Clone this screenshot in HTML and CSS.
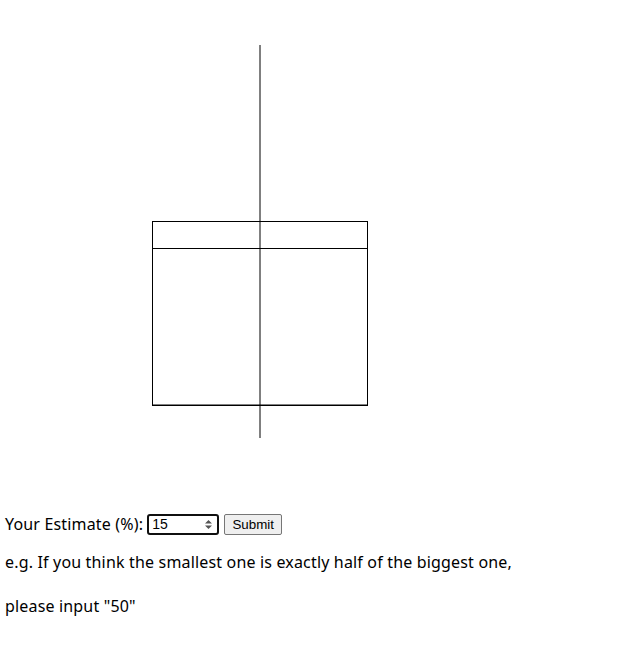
FILE: index.html
```html
<!DOCTYPE html>
<html>
<head>
<meta charset="utf-8">
<link rel="stylesheet" href="styles.css">
</head>
<body>
<svg class="chart" width="623" height="500" viewBox="0 0 623 500">
  <rect x="152.5" y="221.5" width="215" height="184" fill="none" stroke="#000" stroke-width="1"/>
  <line x1="152.5" y1="248.5" x2="367.5" y2="248.5" stroke="#000" stroke-width="1"/>
  <line x1="152" y1="405" x2="368" y2="405" stroke="#000" stroke-width="1"/>
  <line x1="260" y1="45" x2="260" y2="438" stroke="#000" stroke-width="1"/>
</svg>
<div class="form-row">
  <span class="label">Your Estimate (%):</span>
  <span class="num-input"><span class="num-value">15</span><svg class="spin" width="9" height="11" viewBox="0 0 9 11"><path d="M4.5 1 L8 4.5 H1 Z M4.5 10 L8 6.5 H1 Z" fill="#555"/></svg></span>
  <button class="submit">Submit</button>
</div>
<div class="hints">
  <p class="hint">e.g. If you think the smallest one is exactly half of the biggest one,</p>
  <p class="hint">please input "50"</p>
</div>
</body>
</html>
```
FILE: styles.css
```css
html, body {
  margin: 0;
  padding: 0;
  background: #fff;
}
body {
  font-family: "Noto Sans", "Open Sans", sans-serif;
  font-size: 16px;
  letter-spacing: 0.17px;
  color: #000;
  padding-left: 5px;
}
.chart {
  display: block;
  margin-left: -5px;
}
.form-row {
  display: flex;
  align-items: center;
  height: 22px;
  margin-top: 13px;
}
.label {
  margin-right: 4px;
}
.num-input {
  display: inline-flex;
  align-items: center;
  justify-content: space-between;
  box-sizing: border-box;
  width: 72px;
  height: 21px;
  border: 2px solid #101010;
  border-radius: 3px;
  padding: 0 4px 0 3px;
  font-family: "Liberation Sans", Arial, sans-serif;
  font-size: 14px;
  letter-spacing: 0;
}
.spin {
  display: block;
}
.submit {
  margin-left: 5px;
  box-sizing: border-box;
  height: 21px;
  width: 58px;
  padding: 0;
  font-family: "Liberation Sans", Arial, sans-serif;
  font-size: 13.33px;
  letter-spacing: 0;
  color: #000;
  background: #efefef;
  border: 1px solid #767676;
  border-radius: 2px;
}
.hints {
  padding-top: 5px;
}
.hint {
  margin: 0;
  line-height: 44px;
}
```
